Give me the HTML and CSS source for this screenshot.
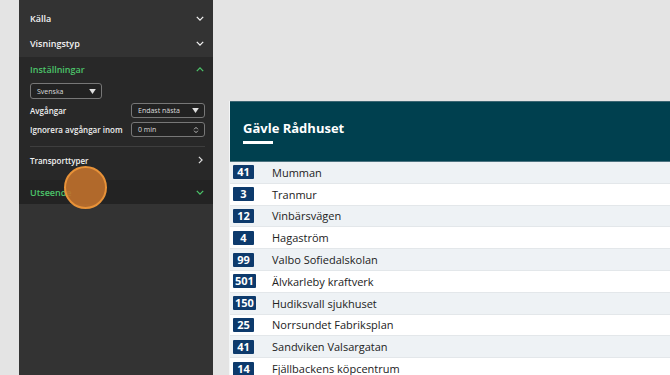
FILE: index.html
```html
<!DOCTYPE html>
<html lang="sv">
<head>
<meta charset="utf-8">
<title>Gävle Rådhuset</title>
<link rel="stylesheet" href="styles.css">
</head>
<body>
<div class="page">
  <aside class="sidebar">
    <div class="acc-head"><span>Källa</span><svg class="chev" viewBox="0 0 10 6"><path d="M1 1l4 4 4-4"/></svg></div>
    <div class="acc-head"><span>Visningstyp</span><svg class="chev" viewBox="0 0 10 6"><path d="M1 1l4 4 4-4"/></svg></div>
    <section class="settings">
      <div class="acc-head green"><span>Inställningar</span><svg class="chev" viewBox="0 0 10 6"><path d="M1 5l4-4 4 4"/></svg></div>
      <div class="lang-row">
        <div class="select lang"><span>Svenska</span><svg class="tri" viewBox="0 0 8 6"><path d="M0 0h8L4 6z"/></svg></div>
      </div>
      <div class="form-row">
        <span class="label">Avgångar</span>
        <div class="select wide"><span>Endast nästa</span><svg class="tri" viewBox="0 0 8 6"><path d="M0 0h8L4 6z"/></svg></div>
      </div>
      <div class="form-row">
        <span class="label">Ignorera avgångar inom</span>
        <div class="select wide"><span>0 min</span><svg class="spin" viewBox="0 0 8 10"><path d="M1.5 4L4 1.5 6.5 4M1.5 6L4 8.5 6.5 6"/></svg></div>
      </div>
      <div class="divider"></div>
      <div class="acc-head small"><span>Transporttyper</span><svg class="chev-r" viewBox="0 0 6 10"><path d="M1 1l4 4-4 4"/></svg></div>
    </section>
    <div class="acc-head green band"><span>Utseende</span><svg class="chev" viewBox="0 0 10 6"><path d="M1 1l4 4 4-4"/></svg></div>
    <div class="cursor"></div>
  </aside>
  <main class="main">
    <div class="card">
      <header class="card-head">
        <h1>Gävle Rådhuset</h1>
        <div class="bar"></div>
      </header>
      <ul class="rows">
        <li><span class="badge">41</span><span class="name">Mumman</span></li>
        <li><span class="badge">3</span><span class="name">Tranmur</span></li>
        <li><span class="badge">12</span><span class="name">Vinbärsvägen</span></li>
        <li><span class="badge">4</span><span class="name">Hagaström</span></li>
        <li><span class="badge">99</span><span class="name">Valbo Sofiedalskolan</span></li>
        <li><span class="badge">501</span><span class="name">Älvkarleby kraftverk</span></li>
        <li><span class="badge">150</span><span class="name">Hudiksvall sjukhuset</span></li>
        <li><span class="badge">25</span><span class="name">Norrsundet Fabriksplan</span></li>
        <li><span class="badge">41</span><span class="name">Sandviken Valsargatan</span></li>
        <li><span class="badge">14</span><span class="name">Fjällbackens köpcentrum</span></li>
      </ul>
    </div>
  </main>
</div>
</body>
</html>
```
FILE: styles.css
```css
* { box-sizing: border-box; }
html, body { margin: 0; padding: 0; }
body {
  background: #e4e4e4;
  font-family: "Open Sans", "Noto Sans", sans-serif;
  width: 670px;
  height: 375px;
  overflow: hidden;
}
.page {
  display: flex;
  height: 375px;
}
.sidebar {
  position: relative;
  margin-left: 19px;
  width: 194px;
  height: 375px;
  background: #333333;
  padding-top: 6px;
  color: #f2f2f2;
  flex: none;
}
.acc-head {
  height: 25px;
  display: flex;
  align-items: center;
  justify-content: space-between;
  padding: 0 9px 0 11px;
  font-size: 9px;
  font-weight: 600;
}
.acc-head.green { color: #4cc46a; }
.acc-head.small { font-size: 8px; height: 24px; }
.chev { width: 8px; height: 5px; fill: none; stroke: currentColor; stroke-width: 1.6; }
.chev-r { width: 5px; height: 8px; fill: none; stroke: #ddd; stroke-width: 1.5; margin-right: 1px; }
.settings {
  background: #282828;
  margin-top: 1px;
  padding-bottom: 8px;
}
.lang-row { padding: 1px 0 0 11px; }
.select {
  height: 16px;
  border: 1px solid #777;
  border-radius: 3px;
  background: #222;
  display: flex;
  align-items: center;
  justify-content: space-between;
  padding: 0 5px 0 6px;
  font-size: 7px;
  color: #ddd;
}
.select.lang { width: 72px; }
.select.wide { width: 74px; height: 15px; }
.tri { width: 7px; height: 5px; fill: #e0e0e0; }
.spin { width: 6px; height: 8px; fill: none; stroke: #ddd; stroke-width: 1.1; }
.form-row {
  display: flex;
  align-items: center;
  justify-content: space-between;
  padding: 0 8px 0 11px;
  margin-top: 4px;
}
.label { font-size: 8px; font-weight: 600; color: #f0f0f0; }
.divider {
  height: 1px;
  background: #3e3e3e;
  margin: 9px 8px 1px 11px;
}
.band {
  background: #232323;
  height: 24px;
}
.cursor {
  position: absolute;
  left: 45px;
  top: 166px;
  width: 43px;
  height: 43px;
  border-radius: 50%;
  background: rgba(190, 112, 44, 0.92);
  border: 2px solid #e89238;
}
.main {
  flex: 1;
  padding: 101px 0 0 16px;
  overflow: hidden;
}
.card {
  width: 460px;
  background: #ffffff;
  border-left: 1px solid #f4f6f7;
}
.card-head {
  height: 61px;
  background: #00404f;
  border-top: 1px solid #3b6572;
  border-bottom: 1px solid #4c7380;
  padding: 17px 0 0 13px;
}
.card-head h1 {
  margin: 0;
  color: #ffffff;
  font-size: 13px;
  font-weight: 700;
  line-height: 18px;
}
.bar {
  width: 30px;
  height: 3px;
  background: #ffffff;
  margin-top: 4px;
}
.rows {
  list-style: none;
  margin: 0;
  padding: 0;
}
.rows li {
  height: 21.8px;
  display: grid;
  grid-template-columns: 39px 1fr;
  align-items: center;
  padding-left: 3px;
  border-bottom: 1px solid #e3e7ea;
  background: #ffffff;
}
.rows li:nth-child(odd) { background: #eef2f5; }
.badge {
  justify-self: start;
  min-width: 21px;
  height: 14px;
  padding: 0 2px;
  background: #0d3a6c;
  color: #ffffff;
  font-size: 11px;
  font-weight: 700;
  line-height: 14px;
  text-align: center;
  border-radius: 1px;
}
.name {
  font-size: 11px;
  color: #222;
}
```
